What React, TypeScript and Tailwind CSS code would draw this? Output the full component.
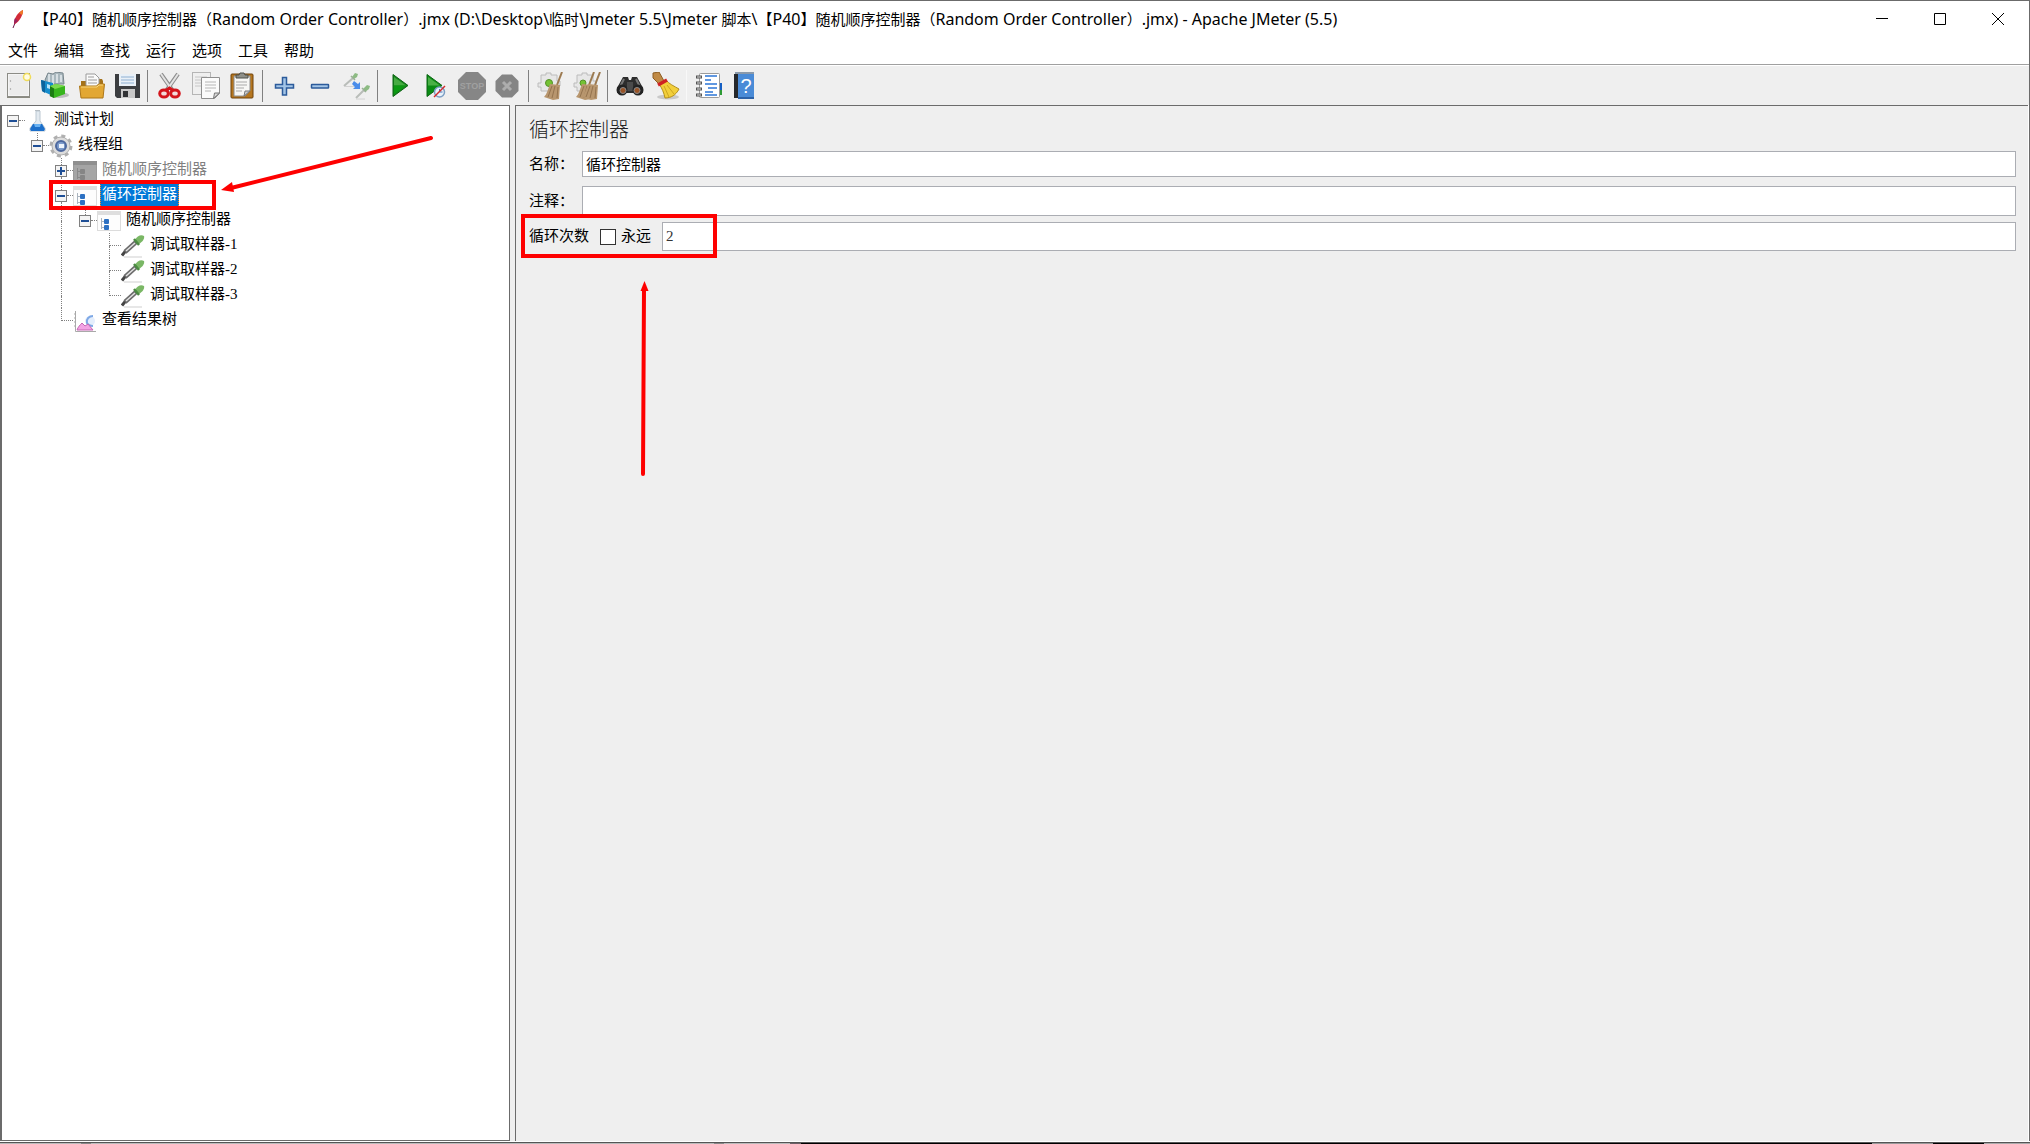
import React from 'react';

type IconProps = { className?: string };

const NewIcon: React.FC<IconProps> = ({ className }) => (
  <svg viewBox="0 0 28 28" className={className}>
    <rect x="2.5" y="1.5" width="22" height="23" fill="#f4f4f4" stroke="#8c8c86" />
    <rect x="4" y="3" width="19" height="20" fill="#ececec" />
    <path d="M2 25.500h23" stroke="#8a8a80" />
    <circle cx="5.500" cy="9" r=".7" fill="#999" />
    <circle cx="5.500" cy="17" r=".7" fill="#999" />
    <circle cx="22" cy="5" r="3.500" fill="#fffbe0" stroke="#f0dc5a" strokeWidth="1.500" />
  </svg>
);

const TemplatesIcon: React.FC<IconProps> = ({ className }) => (
  <svg viewBox="0 0 28 28" className={className}>
    <ellipse cx="18" cy="23" rx="10" ry="3" fill="#bdbdbd" />
    <path d="M4 8l3-7 5 1 3-2 7 1 1 11H6z" fill="#a9b7bd" stroke="#78868c" />
    <path d="M8 2v8M12 3v9M16 2v9M20 3v7" stroke="#e6edf0" strokeWidth="1.500" />
    <path d="M0 8l12 3v13L1 19z" fill="#158ccb" />
    <path d="M0 8l4 1v12l-3-2z" fill="#0b639c" />
    <path d="M6 12l3 1v4l-3-1z" fill="#b5e2f7" />
    <path d="M9 14l6-2 9 2v8l-11 4-4-2z" fill="#37b51c" />
    <path d="M9 14l4 2v10l-4-2z" fill="#1b7c12" />
    <path d="M9 14l6-2 9 2-10 3z" fill="#7cda4e" />
  </svg>
);

const OpenIcon: React.FC<IconProps> = ({ className }) => (
  <svg viewBox="0 0 28 28" className={className}>
    <path d="M4 9h6l2-2h13l1 2v16H4z" fill="#a5721a" />
    <path d="M9 2h9l4 4v10H9z" fill="#fafafa" stroke="#9a9a9a" />
    <path d="M11 5h6M11 8h9M11 11h9" stroke="#9b9b9b" />
    <path d="M2.500 14h17l2-2h6l-1.500 14h-22z" fill="#e2a733" stroke="#ad7718" />
    <path d="M4 15h16l2-2h4" stroke="#f8d67d" fill="none" />
  </svg>
);

const SaveIcon: React.FC<IconProps> = ({ className }) => (
  <svg viewBox="0 0 28 28" className={className}>
    <path d="M2 2h25v24H4l-2-2z" fill="#3b3d40" />
    <rect x="6" y="2" width="17" height="12" fill="#e9f0f7" />
    <path d="M8 5h13M8 8h13M8 11h13" stroke="#8fb0d2" />
    <rect x="8" y="17" width="14" height="9" fill="#c8c8c8" />
    <rect x="10" y="19" width="5" height="6" fill="#303234" />
  </svg>
);

const CutIcon: React.FC<IconProps> = ({ className }) => (
  <svg viewBox="0 0 28 28" className={className}>
    <path d="M5 2l12 17M22 2L10 19" stroke="#8d8d8d" strokeWidth="4" />
    <path d="M5 2l11 16M22 2L11 18" stroke="#e3e3e3" strokeWidth="2" />
    <ellipse cx="8" cy="21.500" rx="4.300" ry="3.500" fill="#f2dada" stroke="#d4151c" strokeWidth="3" />
    <ellipse cx="19" cy="21.500" rx="4.300" ry="3.500" fill="#f2dada" stroke="#d4151c" strokeWidth="3" />
    <path d="M10.500 18l3-2 3 2" stroke="#d4151c" strokeWidth="3" fill="none" />
  </svg>
);

const CopyIcon: React.FC<IconProps> = ({ className }) => (
  <svg viewBox="0 0 28 28" className={className}>
    <rect x=".5" y=".5" width="18" height="22" fill="#efefef" stroke="#b5b5b5" />
    <path d="M3 5h12M3 8h6M3 11h6M3 14h6" stroke="#c6c6c6" />
    <path d="M9.500 5.500h18v16l-5 5h-13z" fill="#fbfbfb" stroke="#8f8f8f" />
    <path d="M13 10h11M13 13h11M13 16h11M13 19h6" stroke="#b6b6b6" />
    <path d="M21.500 26.500l1-5.500h5z" fill="#d8d8d8" stroke="#777" />
  </svg>
);

const PasteIcon: React.FC<IconProps> = ({ className }) => (
  <svg viewBox="0 0 28 28" className={className}>
    <rect x="3" y="2" width="22" height="24" rx="1" fill="#b5761f" stroke="#6f430c" />
    <path d="M6 4h16v15l-5 5H6z" fill="#f7f7f5" stroke="#8c8c8c" />
    <path d="M8 10h11M8 13h11M8 16h8M8 19h6" stroke="#a9a9a9" />
    <path d="M16 24l1-5h5z" fill="#cfcfcf" stroke="#777" />
    <path d="M8 6V3h3l1-2h4l1 2h3v3z" fill="#8e8f88" stroke="#4f504b" />
  </svg>
);

const PlusIcon: React.FC<IconProps> = ({ className }) => (
  <svg viewBox="0 0 28 28" className={className}>
    <path d="M11.500 5.500h4v7h7v3.500h-7v7h-4v-7h-7v-3.500h7z" fill="#a3c4e6" stroke="#2c5b9b" strokeWidth="1.500" />
  </svg>
);

const MinusIcon: React.FC<IconProps> = ({ className }) => (
  <svg viewBox="0 0 28 28" className={className}>
    <rect x="4.500" y="12.500" width="17" height="3.500" rx=".5" fill="#a3c4e6" stroke="#2c5b9b" strokeWidth="1.500" />
  </svg>
);

const ToggleIcon: React.FC<IconProps> = ({ className }) => (
  <svg viewBox="0 0 28 28" className={className}>
    <path d="M1 14l9-8M13 26l8-8" stroke="#b9bdb9" strokeWidth="2" />
    <path d="M9 5l3-4 3 1-1 3-3 2zM20 17l4-4 3 1-1 3-4 3z" fill="#8dbb83" />
    <path d="M8 4l4 4M19 16l4 4" stroke="#9ab095" strokeWidth="1.500" />
    <path d="M1 14.500h13M13 27h9" stroke="#d2d2d2" />
    <path d="M11 9l4 3 2-2v7h-7l2-2-3-3z" fill="#4b8dea" />
  </svg>
);

const StartIcon: React.FC<IconProps> = ({ className }) => (
  <svg viewBox="0 0 28 28" className={className}>
    <path d="M7 2.500L22 13.500 7 24.500z" fill="#15831c" stroke="#0b6512" />
    <path d="M8 5L20 13.500H8z" fill="#45ab41" />
    <path d="M8 13.500h12L8 22.500z" fill="#0a9a11" />
  </svg>
);

const StartNoTimerIcon: React.FC<IconProps> = ({ className }) => (
  <svg viewBox="0 0 28 28" className={className}>
    <path d="M5 2.500L20 13.500 5 24.500z" fill="#0a8c14" stroke="#0b6512" />
    <path d="M6 5l12 8.500H6z" fill="#4ab046" />
    <circle cx="17.500" cy="20" r="5" fill="#e8f1fa" stroke="#7d9fc4" strokeWidth="1.500" />
    <path d="M17.500 17v3h3" stroke="#4a79b3" fill="none" />
    <path d="M12 25l11-11" stroke="#d22b2b" strokeWidth="1.500" />
  </svg>
);

const StopIcon: React.FC<IconProps> = ({ className }) => (
  <svg viewBox="0 0 28 28" className={className}>
    <path d="M8 0h12l8 8v12l-8 8H8l-8-8V8z" fill="#868686" />
    <text x="14" y="17" textAnchor="middle" fontSize="9" fontWeight="700" fill="#a0a0a0" fontFamily="Liberation Sans">STOP</text>
  </svg>
);

const ShutdownIcon: React.FC<IconProps> = ({ className }) => (
  <svg viewBox="0 0 28 28" className={className}>
    <path d="M8 2.500h10l6.500 6.500v10L18 25.500H8L1.500 19V9z" fill="#848484" />
    <path d="M9 10l8 8M17 10l-8 8" stroke="#adadad" strokeWidth="3" />
  </svg>
);

const Broom: React.FC<{ x: number }> = ({ x }) => (
  <g transform={`translate(${x} 0)`}>
    <path d="M25 0l-5 13" stroke="#9c7a50" strokeWidth="2" />
    <path d="M13 12l10 1-1 14-6 1-9-3c3-3 4-8 6-13z" fill="#b8966e" />
    <path d="M15 14l-4 11M18 14l-3 12M21 15l-1 11" stroke="#94734e" />
  </g>
);

const ClearIcon: React.FC<IconProps> = ({ className }) => (
  <svg viewBox="0 0 28 28" className={className}>
    <path d="M4 3h5V1h5v2h6v6h3v5h-3v5H4v-4H1v-4h3z" fill="#e7e7e7" stroke="#bcbcbc" />
    <circle cx="12" cy="11" r="3.500" fill="#74c233" stroke="#55912a" />
    <Broom x={0} />
  </svg>
);

const ClearAllIcon: React.FC<IconProps> = ({ className }) => (
  <svg viewBox="0 0 28 28" className={className}>
    <path d="M4 3h5V1h5v2h6v6h3v5h-3v5H4v-4H1v-4h3z" fill="#e7e7e7" stroke="#bcbcbc" />
    <circle cx="10" cy="11" r="3" fill="#74c233" stroke="#55912a" />
    <Broom x={-4} />
    <Broom x={2} />
  </svg>
);

const SearchIcon: React.FC<IconProps> = ({ className }) => (
  <svg viewBox="0 0 28 28" className={className}>
    <path d="M7 5h5l1 3h2l1-3h5l6 11v5H1v-5z" fill="#2d2d2d" />
    <path d="M8 7l-4 8M20 7l4 8" stroke="#777" strokeWidth="2" />
    <path d="M11 10h6v9h-6z" fill="#4b4b4b" />
    <circle cx="6" cy="18" r="5.500" fill="#222" />
    <circle cx="22" cy="18" r="5.500" fill="#222" />
    <circle cx="7" cy="18.500" r="3" fill="#995326" stroke="#8c8c8c" />
    <circle cx="21" cy="18.500" r="3" fill="#995326" stroke="#8c8c8c" />
  </svg>
);

const SearchResetIcon: React.FC<IconProps> = ({ className }) => (
  <svg viewBox="0 0 28 28" className={className}>
    <ellipse cx="16" cy="25" rx="11" ry="2.500" fill="#c9c9c9" />
    <path d="M1 1l6-1 5 9-5 3-6-6z" fill="#c08a45" stroke="#8d5d22" />
    <path d="M7 12l7-4c3 4 8 6 13 9-3 6-8 9-14 9-1-5-3-10-6-14z" fill="#f2cf3b" stroke="#b4901a" />
    <path d="M12 14l5 11M15 13l7 9" stroke="#cda621" />
    <path d="M6 13l9-5" stroke="#cf2222" strokeWidth="3.500" />
  </svg>
);

const FunctionHelperIcon: React.FC<IconProps> = ({ className }) => (
  <svg viewBox="0 0 28 28" className={className}>
    <rect x="24" y="11" width="3" height="8" fill="#145fc4" />
    <rect x="24" y="18" width="3" height="5" fill="#2d9a34" />
    <rect x="4.500" y="1.500" width="20" height="24" rx="1" fill="#fff" stroke="#9b9b9b" />
    <path d="M10 4h12M10 8h6M10 12h12M13 16h9M10 20h8M10 23h12" stroke="#2c75d6" strokeWidth="1.500" />
    <path d="M1 5h6M1 11h6M1 17h6M1 23h6" stroke="#555" strokeWidth="3" />
    <path d="M2 5h4M2 11h4M2 17h4M2 23h4" stroke="#ddd" />
  </svg>
);

const HelpIcon: React.FC<IconProps> = ({ className }) => (
  <svg viewBox="0 0 28 28" className={className}>
    <path d="M3 2h20v24H3z" fill="#4a8bd7" />
    <path d="M3 2h4v24H3z" fill="#25282c" />
    <path d="M4 1h19" stroke="#8a99aa" strokeWidth="2" />
    <path d="M7 26h16" stroke="#2c62a8" strokeWidth="2" />
    <text x="15" y="21" textAnchor="middle" fontSize="20" fill="#fff" fontFamily="Liberation Sans">?</text>
  </svg>
);

const FlaskIcon: React.FC<IconProps> = ({ className }) => (
  <svg viewBox="0 0 24 24" className={className}>
    <path d="M11 2h4v10l5 7v3H5v-3l6-7z" fill="#e3eaf0" stroke="#bcc8d2" />
    <path d="M8 15h9l3 5-1 2H6l-1-2z" fill="#1c6fca" />
    <path d="M9 15h7l-1 3h-5z" fill="#68b1f1" />
    <path d="M10 1.500h5" stroke="#b5bcc2" />
  </svg>
);

const GearIcon: React.FC<IconProps> = ({ className }) => (
  <svg viewBox="0 0 24 24" className={className}>
    <circle cx="12" cy="12" r="10" fill="none" stroke="#b0b0b0" strokeWidth="3" strokeDasharray="4 3.850" />
    <circle cx="12" cy="12" r="9" fill="#dcdcdc" stroke="#adadad" />
    <circle cx="12" cy="12" r="5" fill="#7d9ccc" stroke="#4d689e" strokeWidth="2" />
    <rect x="10" y="10" width="5" height="4" fill="#eef4fc" />
  </svg>
);

const ControllerIcon: React.FC<IconProps & { disabled?: boolean }> = ({ className, disabled }) => (
  <svg viewBox="0 0 24 24" className={className}>
    <rect x=".5" y="2.500" width="23" height="19" fill={disabled ? '#a5a5a5' : '#fdfdfd'} stroke={disabled ? '#9a9a9a' : '#dcdcdc'} />
    <rect x="0" y="2" width="24" height="4" fill={disabled ? '#8f8f8f' : '#dedede'} />
    <path d="M4.500 9v11M4.500 12.500H7M4.500 18.500H7" stroke={disabled ? '#8a8a8a' : '#aab4bf'} fill="none" />
    <rect x="7" y="10" width="5" height="5" rx="1" fill={disabled ? '#858585' : '#2c70c2'} />
    <rect x="7" y="16" width="5" height="5" rx="1" fill={disabled ? '#858585' : '#2c70c2'} />
  </svg>
);

const DropperIcon: React.FC<IconProps> = ({ className }) => (
  <svg viewBox="0 0 24 24" className={className}>
    <path d="M3 23h18" stroke="#cfcfcf" />
    <path d="M1 21.500l4-5" stroke="#444" strokeWidth="3" />
    <path d="M4 18L15 8" stroke="#6b6b6b" strokeWidth="4.500" />
    <path d="M5 17l9-8" stroke="#e2e2e2" strokeWidth="1.500" />
    <path d="M14 6c2-4 6-6 9-4 1 3-2 6-5 8z" fill="#7ab765" />
    <path d="M13 5l5 6" stroke="#4b8a42" strokeWidth="2.500" />
  </svg>
);

const ResultsIcon: React.FC<IconProps> = ({ className }) => (
  <svg viewBox="0 0 24 24" className={className}>
    <path d="M2.500 2v20.500H23" stroke="#a9a9a9" fill="none" />
    <path d="M1 5h2M1 9h2M1 13h2M1 17h2" stroke="#a9a9a9" />
    <circle cx="17" cy="12" r="5" fill="#e4eefc" />
    <path d="M20 7c-4 0-7 3-6 7 1 2 3 3 6 3" stroke="#7fa9e6" strokeWidth="2" fill="none" />
    <path d="M4 21c1-3 3-5 5-7l3 3 3-2 5 6z" fill="#f3a3e4" stroke="#c567b4" />
  </svg>
);

const FeatherIcon: React.FC<IconProps> = ({ className }) => (
  <svg viewBox="0 0 18 20" className={className}>
    <path d="M5 19l2-5" stroke="#6b1a4b" />
    <path d="M6 15c0-6 4-12 9-14 0 5-3 11-8 14z" fill="#d22a38" />
    <path d="M11 4c1-1 3-3 4-3 0 2 0 4-1 5z" fill="#ee7a2a" />
    <path d="M6 15c0-2 0-4 1-6l3 3z" fill="#9a2360" />
  </svg>
);

const MENUS = ['文件', '编辑', '查找', '运行', '选项', '工具', '帮助'];

const TOOLS: { label: string; icon: React.FC<IconProps>; separator?: string }[] = [
  { label: '新建', icon: NewIcon },
  { label: '模板', icon: TemplatesIcon },
  { label: '打开', icon: OpenIcon },
  { label: '保存', icon: SaveIcon, separator: 'border-[#808080]' },
  { label: '剪切', icon: CutIcon },
  { label: '复制', icon: CopyIcon },
  { label: '粘贴', icon: PasteIcon, separator: 'border-[#808080]' },
  { label: '全部展开', icon: PlusIcon },
  { label: '全部折叠', icon: MinusIcon },
  { label: '切换', icon: ToggleIcon, separator: 'border-[#808080]' },
  { label: '启动', icon: StartIcon },
  { label: '不停顿启动', icon: StartNoTimerIcon },
  { label: '停止', icon: StopIcon },
  { label: '关闭', icon: ShutdownIcon, separator: 'border-[#808080]' },
  { label: '清除', icon: ClearIcon },
  { label: '清除全部', icon: ClearAllIcon, separator: 'border-[#808080]' },
  { label: '搜索', icon: SearchIcon },
  { label: '重置搜索', icon: SearchResetIcon, separator: 'border-[#f8f8f8]' },
  { label: '函数助手', icon: FunctionHelperIcon },
  { label: '帮助', icon: HelpIcon },
];

// one guide per indent level: empty, a line passing by, a branch, or the last branch
type Guide = 'none' | 'line' | 'tee' | 'end';

interface TreeNode {
  name: string;
  icon: React.ReactNode;
  guides: Guide[];
  toggle?: 'open' | 'closed';
  through?: boolean;
  disabled?: boolean;
  selected?: boolean;
}

const NODES: TreeNode[] = [
  { name: '测试计划', icon: <FlaskIcon className="size-6" />, guides: [], toggle: 'open' },
  { name: '线程组', icon: <GearIcon className="size-6" />, guides: ['none'], toggle: 'open' },
  { name: '随机顺序控制器', icon: <ControllerIcon className="size-6" disabled />, guides: ['none', 'none'], toggle: 'closed', through: true, disabled: true },
  { name: '循环控制器', icon: <ControllerIcon className="size-6" />, guides: ['none', 'none'], toggle: 'open', through: true, selected: true },
  { name: '随机顺序控制器', icon: <ControllerIcon className="size-6" />, guides: ['none', 'none', 'line'], toggle: 'open' },
  { name: '调试取样器-1', icon: <DropperIcon className="size-6" />, guides: ['none', 'none', 'line', 'none', 'tee'] },
  { name: '调试取样器-2', icon: <DropperIcon className="size-6" />, guides: ['none', 'none', 'line', 'none', 'tee'] },
  { name: '调试取样器-3', icon: <DropperIcon className="size-6" />, guides: ['none', 'none', 'line', 'none', 'end'] },
  { name: '查看结果树', icon: <ResultsIcon className="size-6" />, guides: ['none', 'none', 'end'] },
];

const GuideCell: React.FC<{ kind: Guide; leaf: boolean }> = ({ kind, leaf }) => (
  <span className={`flex h-full shrink-0 flex-col pl-1.5 ${leaf ? 'w-4.5' : 'w-6'}`}>
    {kind !== 'none' && (
      <span className={`h-1/2 border-l border-dotted border-[#808080] ${kind === 'line' ? '' : 'border-b'}`} />
    )}
    {(kind === 'line' || kind === 'tee') && <span className="h-1/2 border-l border-dotted border-[#808080]" />}
  </span>
);

const TreeRow: React.FC<{ node: TreeNode }> = ({ node }) => {
  const leaf = !node.toggle;
  return (
    <li className="flex h-[25px] items-center">
      {node.guides.map((kind, i) => (
        <GuideCell key={i} kind={kind} leaf={leaf && i === node.guides.length - 1} />
      ))}
      {node.toggle && (
        <span className="flex h-full w-4.5 shrink-0 items-center">
          <span className="flex h-full w-3 flex-col items-center">
            <span className={`w-0 flex-1 border-l border-dotted ${node.guides.length ? 'border-[#808080]' : 'border-transparent'}`} />
            <button
              aria-label={node.name}
              className="flex size-3 items-center justify-center border border-[#808080] bg-[#f4f4f4]"
            >
              <svg viewBox="0 0 10 10" className="size-2.5">
                <path d={node.toggle === 'open' ? 'M1 5h8' : 'M1 5h8M5 1v8'} stroke="#1f4f96" strokeWidth="2" />
              </svg>
            </button>
            <span className={`w-0 flex-1 border-l border-dotted ${node.through ? 'border-[#808080]' : 'border-transparent'}`} />
          </span>
          <span className="w-1.5 border-t border-dotted border-[#808080]" />
        </span>
      )}
      <span className="shrink-0">{node.icon}</span>
      <span
        className={`ml-[3px] flex h-[25px] items-center border border-dotted px-px pb-0.5 ${node.selected ? 'border-[#ff8728] bg-[#0078d7] text-white' : 'border-transparent'} ${node.disabled ? 'text-[#808080]' : ''}`}
      >
        {node.name}
      </span>
    </li>
  );
};

const Cjk: React.FC<{ children: React.ReactNode }> = ({ children }) => (
  <span className="text-[15px]">{children}</span>
);

const TitleBar: React.FC = () => (
  <header className="flex h-9 items-center bg-white pl-2 pr-0.5">
    <FeatherIcon className="h-5 w-[18px]" />
    <h1 className="ml-2 flex-1 truncate text-base leading-6">
      <Cjk>【</Cjk>P40<Cjk>】随机顺序控制器（</Cjk>Random Order Controller<Cjk>）</Cjk>
      .jmx (D:\Desktop\<Cjk>临时</Cjk>\Jmeter 5.5\Jmeter <Cjk>脚本</Cjk>\<Cjk>【</Cjk>P40
      <Cjk>】随机顺序控制器（</Cjk>Random Order Controller<Cjk>）</Cjk>.jmx) - Apache JMeter (5.5)
    </h1>
    <button aria-label="最小化" className="flex h-9 w-[58px] items-center justify-center">
      <svg viewBox="0 0 12 12" className="size-3"><path d="M0 5.500h12" stroke="#000" /></svg>
    </button>
    <button aria-label="最大化" className="flex h-9 w-[58px] items-center justify-center">
      <svg viewBox="0 0 12 12" className="size-3"><path d="M.5.5h11v11H.5z" stroke="#000" fill="none" /></svg>
    </button>
    <button aria-label="关闭窗口" className="flex h-9 w-[58px] items-center justify-center">
      <svg viewBox="0 0 12 12" className="size-3"><path d="M0 0l12 12M12 0L0 12" stroke="#000" /></svg>
    </button>
  </header>
);

const Toolbar: React.FC = () => (
  <div className="flex h-[39px] items-center bg-[#efefef] pl-[5px]">
    {TOOLS.map(({ label, icon: Icon, separator }) => (
      <React.Fragment key={label}>
        <button aria-label={label} className="mr-2 shrink-0">
          <Icon className="size-7" />
        </button>
        {separator && <span className={`-ml-0.5 mr-2 h-8 border-l ${separator}`} />}
      </React.Fragment>
    ))}
  </div>
);

const LoopPanel: React.FC = () => (
  <main className="relative flex-1 border-l border-t border-[#6b6b6b] px-3 pt-3">
    <h2 className="ml-px h-6 text-xl font-light leading-6 text-[#222]">循环控制器</h2>
    <div className="mt-[9px] flex h-[26px] items-center">
      <label htmlFor="name" className="w-[54px] shrink-0 pl-px">名称：</label>
      <input id="name" defaultValue="循环控制器" className="h-full min-w-0 flex-1 border border-[#abadb3] bg-white px-[3px] pb-0.5" />
    </div>
    <div className="mt-[9px] flex h-[30px] items-center">
      <label htmlFor="comment" className="w-[54px] shrink-0 pl-px">注释：</label>
      <input id="comment" className="h-full min-w-0 flex-1 border border-[#abadb3] bg-white px-[3px] pb-0.5" />
    </div>
    <div className="mt-1.5 flex h-[29px] items-center">
      <label htmlFor="loops" className="w-[72px] shrink-0 pl-px">循环次数</label>
      <input id="forever" type="checkbox" className="size-4 shrink-0 appearance-none border border-[#333] bg-white" />
      <label htmlFor="forever" className="w-[46px] shrink-0 pl-[5px]">永远</label>
      <input id="loops" defaultValue="2" className="h-full min-w-0 flex-1 border border-[#abadb3] bg-white px-[3px] text-[#333]" />
    </div>
    <div className="absolute left-[5px] top-[108px] h-11 w-[196px] border-4 border-[#fe0000]" />
    <svg viewBox="0 0 12 196" className="absolute left-[122px] top-[175px] h-[196px] w-3">
      <path d="M5 193L6 8" stroke="#fe0000" strokeWidth="4" strokeLinecap="round" />
      <path d="M6.500 0l4 10h-8z" fill="#fe0000" />
    </svg>
  </main>
);

const App: React.FC = () => {
  return (
    <div className="flex h-screen flex-col bg-white font-[Noto_Sans,Noto_Sans_CJK_SC,sans-serif] text-[15px] text-black">
      <div className="flex min-h-0 flex-1 flex-col border-r border-t border-[#6b6b6b]">
        <TitleBar />
        <nav className="flex h-[27px] items-center gap-4 pb-0.5 pl-2">
          {MENUS.map(menu => (
            <button key={menu} className="leading-5">{menu}</button>
          ))}
        </nav>
        <div className="border-t border-[#a0a0a0] pt-px">
          <Toolbar />
        </div>
        <div className="flex min-h-0 flex-1 border-r border-white bg-[#efefef] font-[Liberation_Serif,Noto_Sans_CJK_SC,serif]">
          <aside className="relative w-[510px] shrink-0 border border-l-2 border-[#6b6b6b] bg-white">
            <ul className="pl-[5px] pt-0.5">
              {NODES.map((node, i) => (
                <TreeRow key={i} node={node} />
              ))}
            </ul>
            <div className="absolute left-[47px] top-[74px] h-[30px] w-[167px] border-4 border-[#fe0000]" />
            <svg viewBox="0 0 216 60" className="absolute left-[217px] top-[28px] h-[60px] w-[216px]">
              <path d="M212 4L12 54" stroke="#fe0000" strokeWidth="4" strokeLinecap="round" />
              <path d="M2 56l11-8 2 10z" fill="#fe0000" />
            </svg>
          </aside>
          <div className="w-[5px] shrink-0" />
          <LoopPanel />
        </div>
      </div>
      <footer className="flex h-[3px] flex-col">
        <div className="h-px" />
        <div className="flex h-0.5 border-t border-[#555]">
          <span className="w-[81px] bg-[#bbb]" />
          <span className="w-2.5 bg-[#888]" />
          <span className="w-[623px] bg-[#bbb]" />
          <span className="w-2.5 bg-[#888]" />
          <span className="w-[66px] bg-[#bbb]" />
          <span className="w-[11px] bg-[#6d5f66]" />
          <span className="flex-1 bg-black" />
          <span className="w-[61px] bg-[#999]" />
          <span className="w-[51px] bg-black" />
          <span className="w-[46px] bg-[#aaa]" />
        </div>
      </footer>
    </div>
  );
};

export default App;
